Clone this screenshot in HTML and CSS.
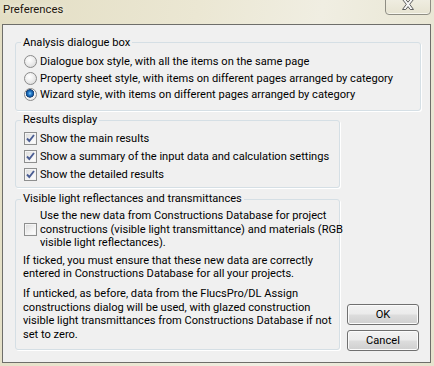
FILE: index.html
```html
<!DOCTYPE html>
<html lang="en">
<head>
    <meta charset="UTF-8">
    <meta name="viewport" content="width=device-width, initial-scale=1.0">
    <title>Preferences</title>
    <link rel="stylesheet" href="styles.css">
</head>
<body>
    <div class="window">
        <div class="titlebar">
            <span class="title">Preferences</span>
            <button class="close" aria-label="Close">
                <svg width="12" height="11" viewBox="0 0 12 11">
                    <polygon points="0.5,0.5 3.8,0.5 6,3.2 8.2,0.5 11.5,0.5 7.7,5.3 11.5,10.5 8.2,10.5 6,7.6 3.8,10.5 0.5,10.5 4.3,5.3" fill="#f6f6f6" stroke="#5e5e5e" stroke-width="1"/>
                </svg>
            </button>
        </div>
        <div class="client">
            <fieldset class="group group-analysis">
                <legend>Analysis dialogue box</legend>
                <label class="option"><span class="radio"></span>Dialogue box style, with all the items on the same page</label>
                <label class="option"><span class="radio"></span>Property sheet style, with items on different pages arranged by category</label>
                <label class="option"><span class="radio checked"></span>Wizard style, with items on different pages arranged by category</label>
            </fieldset>
            <div class="lower">
                <div class="groups">
                    <fieldset class="group group-results">
                        <legend>Results display</legend>
                        <label class="check-row"><span class="box"><svg width="11" height="11" viewBox="0 0 11 11"><path d="M2 5.5 L4.3 8 L9 2" fill="none" stroke="#4a5d93" stroke-width="1.9"/></svg></span>Show the main results</label>
                        <label class="check-row"><span class="box"><svg width="11" height="11" viewBox="0 0 11 11"><path d="M2 5.5 L4.3 8 L9 2" fill="none" stroke="#4a5d93" stroke-width="1.9"/></svg></span>Show a summary of the input data and calculation settings</label>
                        <label class="check-row"><span class="box"><svg width="11" height="11" viewBox="0 0 11 11"><path d="M2 5.5 L4.3 8 L9 2" fill="none" stroke="#4a5d93" stroke-width="1.9"/></svg></span>Show the detailed results</label>
                    </fieldset>
                    <fieldset class="group group-light">
                        <legend>Visible light reflectances and transmittances</legend>
                        <label class="check-block"><span class="box"></span><span>Use the new data from Constructions Database for project<br>constructions (visible light transmittance) and materials (RGB<br>visible light reflectances).</span></label>
                        <p class="note">If ticked, you must ensure that these new data are correctly<br>entered in Constructions Database for all your projects.</p>
                        <p class="note note-last">If unticked, as before, data from the FlucsPro/DL Assign<br>constructions dialog will be used, with glazed construction<br>visible light transmittances from Constructions Database if not<br>set to zero.</p>
                    </fieldset>
                </div>
                <div class="actions">
                    <button class="btn">OK</button>
                    <button class="btn">Cancel</button>
                </div>
            </div>
        </div>
    </div>
</body>
</html>
```

FILE: styles.css
```css
body {
    margin: 0;
    width: 434px;
    height: 366px;
    overflow: hidden;
    background: linear-gradient(100deg, #e3dec4 0%, #ebe7d3 40%, #f0eee2 65%, #e6e3ce 100%);
    font-family: Roboto, "Liberation Sans", sans-serif;
    font-size: 11.1px;
    color: #000;
}
.window {
    height: 366px;
    display: flex;
    flex-direction: column;
}
.titlebar {
    height: 24px;
    display: flex;
    justify-content: space-between;
    align-items: flex-start;
    padding: 0 3px;
    box-sizing: border-box;
}
.title {
    margin-top: 3px;
    line-height: 14px;
    font-size: 11.3px;
    color: #1e160c;
    text-shadow: 0 0 6px rgba(255, 255, 255, 0.9);
}
.close {
    margin-top: -4px;
    width: 46px;
    height: 19px;
    padding: 0;
    border: 1px solid #8e8d83;
    border-radius: 0 0 4px 4px;
    background: linear-gradient(#f1efe4, #e6e3d1);
    box-shadow: inset 0 -1px 0 #f7f6ee;
    display: flex;
    justify-content: center;
    align-items: flex-end;
    padding-bottom: 4px;
    box-sizing: border-box;
}
.client {
    margin-left: 2px;
    width: 429px;
    height: 339px;
    box-sizing: border-box;
    border: 1px solid #6e6e6a;
    background-color: #f0f0f0;
    padding: 11px 9px 0 12px;
}
.group {
    margin: 0;
    border: 1px solid #d5dfe5;
    border-radius: 3px;
    box-shadow: 1px 1px 0 #fff;
    padding: 0 8px;
    min-width: 0;
}
.group legend {
    margin-left: -3px;
    padding: 0 2px;
    line-height: 13.4px;
}
.group-analysis {
    padding-top: 4px;
    padding-bottom: 7px;
}
.option {
    display: flex;
    align-items: center;
    gap: 3px;
    height: 16.5px;
    white-space: nowrap;
}
.radio {
    width: 13px;
    height: 13px;
    box-sizing: border-box;
    border-radius: 50%;
    border: 1px solid #8b8b8b;
    background: radial-gradient(circle at 40% 35%, #ffffff 0, #f2f2f2 35%, #d3d3d3 100%);
    flex: none;
}
.radio.checked {
    background: radial-gradient(circle at 45% 40%, #8fd2ff 0, #2f86d2 1.5px, #0d4c93 3.5px, #26456e 4px, #f6f6f6 4.5px, #dcdcdc 100%);
}
.lower {
    display: flex;
    align-items: stretch;
}
.groups {
    width: 325px;
    flex: none;
}
.group-results {
    margin-top: 2.4px;
    padding-top: 2.3px;
    padding-bottom: 4px;
}
.check-row {
    display: flex;
    align-items: center;
    gap: 3px;
    height: 18px;
    white-space: nowrap;
}
.box {
    width: 13px;
    height: 13px;
    box-sizing: border-box;
    border: 1px solid #8e8f8f;
    background: linear-gradient(135deg, #d9d9d9, #f4f4f4 60%, #ffffff);
    box-shadow: inset 0 0 0 1px #f4f4f4;
    display: flex;
    justify-content: center;
    align-items: center;
    flex: none;
}
.group-light {
    margin-top: 4.3px;
    padding-top: 3.6px;
    padding-bottom: 8px;
}
.check-block {
    display: flex;
    align-items: center;
    gap: 3px;
    line-height: 13.4px;
    white-space: nowrap;
}
.note {
    margin: 4.5px 0 0 -1px;
    line-height: 13.4px;
    white-space: nowrap;
}
.note-last {
    margin-top: 6.5px;
}
.actions {
    margin-left: 7px;
    display: flex;
    flex-direction: column;
    justify-content: flex-end;
    gap: 5px;
    margin-bottom: -1px;
}
.btn {
    width: 72px;
    height: 21px;
    padding: 0;
    border: 1px solid #707070;
    border-radius: 3px;
    background: linear-gradient(#f2f2f2 0, #ebebeb 48%, #dddddd 52%, #cfcfcf 100%);
    box-shadow: inset 0 0 0 1px #fbfbfb;
    font: inherit;
    color: #000;
}
```
